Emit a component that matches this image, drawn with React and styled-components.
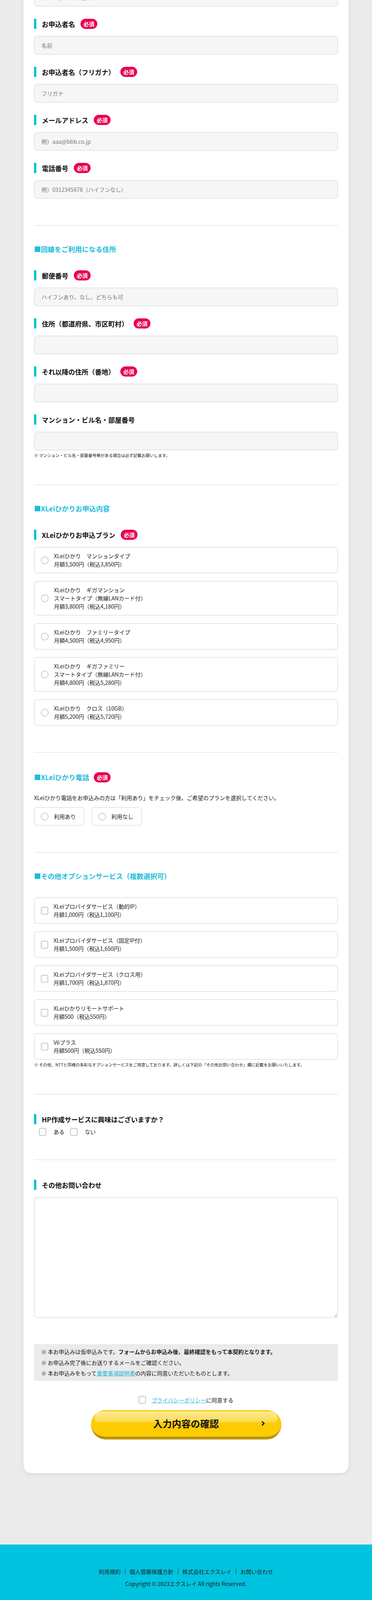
import React from "react";
import styled, { createGlobalStyle } from "styled-components";

const CYAN = "#00c1de";

const GlobalStyle = createGlobalStyle`
  html, body {
    margin: 0;
    padding: 0;
  }
  body {
    background: #ebebeb;
    font-family: "Noto Sans CJK JP", "Noto Sans", sans-serif;
    color: #222;
  }
  * {
    box-sizing: border-box;
  }
`;

const plans = [
  ["XLeiひかり　マンションタイプ", "月額3,500円（税込3,850円）"],
  ["XLeiひかり　ギガマンション", "スマートタイプ（無線LANカード付）", "月額3,800円（税込4,180円）"],
  ["XLeiひかり　ファミリータイプ", "月額4,500円（税込4,950円）"],
  ["XLeiひかり　ギガファミリー", "スマートタイプ（無線LANカード付）", "月額4,800円（税込5,280円）"],
  ["XLeiひかり　クロス（10GB）", "月額5,200円（税込5,720円）"],
];

const options = [
  ["XLeiプロバイダサービス（動的IP）", "月額1,000円（税込1,100円）"],
  ["XLeiプロバイダサービス（固定IP付）", "月額1,500円（税込1,650円）"],
  ["XLeiプロバイダサービス（クロス用）", "月額1,700円（税込1,870円）"],
  ["XLeiひかりリモートサポート", "月額500（税込550円）"],
  ["V6プラス", "月額500円（税込550円）"],
];

const contactFields = [
  { label: "会社名・屋号", placeholder: "法人の方のみご記入ください" },
  { label: "お申込者名", placeholder: "名前", required: true },
  { label: "お申込者名（フリガナ）", placeholder: "フリガナ", required: true },
  { label: "メールアドレス", placeholder: "例）aaa@bbb.co.jp", required: true },
  { label: "電話番号", placeholder: "例）0312345678（ハイフンなし）", required: true },
];

const addressFields = [
  { label: "郵便番号", placeholder: "ハイフンあり、なし、どちらも可", required: true },
  { label: "住所（都道府県、市区町村）", required: true },
  { label: "それ以降の住所（番地）", required: true },
  { label: "マンション・ビル名・部屋番号" },
];

function Field({ label, placeholder, required }) {
  return (
    <FieldBox>
      <Label>
        {label}
        {required && <Badge>必須</Badge>}
      </Label>
      <TextInput type="text" placeholder={placeholder} />
    </FieldBox>
  );
}

function ChoiceCard({ type, name, lines }) {
  return (
    <Choice>
      {type === "radio" ? <Radio name={name} /> : <Check />}
      <span>
        {lines.map((l) => (
          <ChoiceLine key={l}>{l}</ChoiceLine>
        ))}
      </span>
    </Choice>
  );
}

function Arrow() {
  return (
    <ArrowIcon viewBox="0 0 10 14" aria-hidden="true">
      <polyline points="2.5,2 7.5,7 2.5,12" fill="none" stroke="#111" strokeWidth="3" />
    </ArrowIcon>
  );
}

export default function App() {
  return (
    <>
      <GlobalStyle />
      <Card>
        <Section>
          <FieldList>
            {contactFields.map((f) => (
              <Field key={f.label} {...f} />
            ))}
          </FieldList>
        </Section>

        <Section>
          <Heading>■回線をご利用になる住所</Heading>
          <FieldList>
            {addressFields.map((f) => (
              <Field key={f.label} {...f} />
            ))}
          </FieldList>
          <Note>※ マンション・ビル名・部屋番号等がある場合は必ず記載お願いします。</Note>
        </Section>

        <Section>
          <Heading>■XLeiひかりお申込内容</Heading>
          <FieldBox>
            <Label>
              XLeiひかりお申込プラン<Badge>必須</Badge>
            </Label>
            <ChoiceList>
              {plans.map((p) => (
                <ChoiceCard key={p.join()} type="radio" name="plan" lines={p} />
              ))}
            </ChoiceList>
          </FieldBox>
        </Section>

        <Section>
          <Heading $mb={29}>
            ■XLeiひかり電話<Badge>必須</Badge>
          </Heading>
          <Description>
            XLeiひかり電話をお申込みの方は「利用あり」をチェック後、ご希望のプランを選択してください。
          </Description>
          <ChoiceRow>
            <SmallChoice>
              <Radio name="tel" />
              利用あり
            </SmallChoice>
            <SmallChoice>
              <Radio name="tel" />
              利用なし
            </SmallChoice>
          </ChoiceRow>
        </Section>

        <Section>
          <Heading>■その他オプションサービス（複数選択可）</Heading>
          <ChoiceList>
            {options.map((o) => (
              <ChoiceCard key={o.join()} type="check" lines={o} />
            ))}
          </ChoiceList>
          <Note>
            ※ その他、NTTと同様の多彩なオプションサービスをご用意しております。詳しくは下記の「その他お問い合わせ」欄に記載をお願いいたします。
          </Note>
        </Section>

        <Section $pb={61}>
          <Label>HP作成サービスに興味はございますか？</Label>
          <InlineChecks>
            <InlineCheck>
              <Check />
              ある
            </InlineCheck>
            <InlineCheck>
              <Check />
              ない
            </InlineCheck>
          </InlineChecks>
        </Section>

        <Section $last>
          <FieldBox>
            <Label>その他お問い合わせ</Label>
            <TextArea />
          </FieldBox>
        </Section>

        <Notice>
          <p>
            ※ 本お申込みは仮申込みです。<strong>フォームからお申込み後、最終確認をもって本契約となります。</strong>
          </p>
          <p>※ お申込み完了後にお送りするメールをご確認ください。</p>
          <p>
            ※ 本お申込みをもって<TextLink href="#">重要事項説明書</TextLink>の内容に同意いただいたものとします。
          </p>
        </Notice>

        <AgreeRow>
          <Check />
          <span>
            <TextLink href="#">プライバシーポリシー</TextLink>に同意する
          </span>
        </AgreeRow>

        <SubmitButton type="button">
          <span>入力内容の確認</span>
          <Arrow />
        </SubmitButton>
      </Card>

      <Footer>
        <FooterNav>
          <FooterLink href="#">利用規約</FooterLink>
          <Separator />
          <FooterLink href="#">個人情報保護方針</FooterLink>
          <Separator />
          <FooterLink href="#">株式会社エクスレイ</FooterLink>
          <Separator />
          <FooterLink href="#">お問い合わせ</FooterLink>
        </FooterNav>
        <Copyright>Copyright © 2023エクスレイ All rights Reserved.</Copyright>
      </Footer>
    </>
  );
}

const Card = styled.main`
  width: 832px;
  margin: -125px auto 183px;
  padding: 0 27px 86px;
  background: #fff;
  border-radius: 0 0 20px 20px;
  box-shadow: 0 2px 12px rgba(0, 0, 0, 0.09);
`;

const Section = styled.section`
  padding: 50px 0 ${(p) => p.$pb ?? 67}px;
  border-bottom: ${(p) => (p.$last ? "none" : "2px solid #ebebeb")};
`;

const Heading = styled.h2`
  display: flex;
  align-items: center;
  gap: 12px;
  margin: 0 0 ${(p) => p.$mb ?? 44}px;
  font-size: 17.5px;
  line-height: 20px;
  font-weight: 700;
  color: #1dbcd9;
`;

const FieldList = styled.div`
  display: flex;
  flex-direction: column;
  gap: 31px;
`;

const FieldBox = styled.div`
  display: flex;
  flex-direction: column;
  gap: 18px;
`;

const Label = styled.label`
  display: flex;
  align-items: center;
  gap: 14px;
  height: 26px;
  padding-left: 14px;
  border-left: 6px solid ${CYAN};
  font-size: 17px;
  font-weight: 700;
  color: #111;
`;

const Badge = styled.span`
  display: inline-flex;
  align-items: center;
  justify-content: center;
  height: 26px;
  padding: 0 7.5px;
  border-radius: 13px;
  background: #e8004f;
  color: #fff;
  font-size: 14px;
  font-weight: 700;
`;

const TextInput = styled.input`
  display: block;
  width: 100%;
  height: 48px;
  padding: 0 17px;
  border: 2px solid #e5e5e5;
  border-radius: 8px;
  background: #f6f6f6;
  font-family: inherit;
  font-size: 14px;
  color: #222;

  &::placeholder {
    color: #777;
  }
`;

const Note = styled.p`
  margin: 6px 0 0;
  font-size: 10.5px;
  line-height: 14px;
  color: #222;
`;

const ChoiceList = styled.div`
  display: flex;
  flex-direction: column;
  gap: 19px;
`;

const Choice = styled.label`
  display: flex;
  align-items: center;
  gap: 14px;
  padding: 11px 16px;
  border: 2px solid #e6e6e6;
  border-radius: 8px;
  font-size: 14px;
  line-height: 21px;
  color: #222;
`;

const ChoiceLine = styled.span`
  display: block;
`;

const Radio = styled.input.attrs({ type: "radio" })`
  appearance: none;
  flex-shrink: 0;
  width: 19px;
  height: 19px;
  margin: 0;
  border: 1.5px solid #9a9a9a;
  border-radius: 50%;
  background: #fff;
`;

const Check = styled.input.attrs({ type: "checkbox" })`
  appearance: none;
  flex-shrink: 0;
  width: 18px;
  height: 19px;
  margin: 0;
  border: 1.5px solid #929292;
  border-radius: 3px;
  background: #fff;
`;

const Description = styled.p`
  margin: 0 0 14px;
  font-size: 14px;
  line-height: 20px;
  color: #222;
`;

const ChoiceRow = styled.div`
  display: flex;
  gap: 18px;
`;

const SmallChoice = styled.label`
  display: flex;
  align-items: center;
  gap: 14px;
  width: 129px;
  height: 48px;
  padding: 0 16px;
  border: 2px solid #e6e6e6;
  border-radius: 8px;
  font-size: 14px;
  color: #222;
`;

const InlineChecks = styled.div`
  display: flex;
  align-items: center;
  height: 20px;
  margin-top: 9px;
  padding-left: 13px;
`;

const InlineCheck = styled.label`
  display: flex;
  align-items: center;
  gap: 19px;
  margin-right: 15px;
  font-size: 14px;
  color: #222;
`;

const TextArea = styled.textarea`
  display: block;
  width: 100%;
  height: 310px;
  padding: 12px 17px;
  border: 2px solid #e6e6e6;
  border-radius: 8px;
  background: #fff;
  font-family: inherit;
  font-size: 14px;
  resize: vertical;
`;

const Notice = styled.div`
  padding: 6px 18px 5px;
  background: #ebebeb;
  font-size: 14px;
  line-height: 27.5px;
  color: #222;

  p {
    margin: 0;
  }
`;

const TextLink = styled.a`
  color: #1fb6d6;
  text-decoration: underline;
`;

const AgreeRow = styled.label`
  display: flex;
  justify-content: center;
  align-items: center;
  gap: 15px;
  height: 22px;
  margin-top: 38px;
  font-size: 14px;
  color: #222;
`;

const SubmitButton = styled.button`
  position: relative;
  display: flex;
  align-items: center;
  justify-content: center;
  width: 487px;
  height: 75px;
  margin: 15px auto 0;
  padding: 0;
  border: none;
  border-bottom: 7px solid #b8920c;
  border-radius: 38px;
  background: #fccc00;
  box-shadow: inset 0 0 0 1px #f2c200;
  font-family: inherit;
  font-size: 24px;
  font-weight: 700;
  color: #111;
  cursor: pointer;

  &::before {
    content: "";
    position: absolute;
    top: 3px;
    left: 9px;
    right: 9px;
    height: 28px;
    border-radius: 28px 28px 14px 14px;
    background: linear-gradient(#fdea94, #fdd94e);
  }

  span {
    position: relative;
  }
`;

const ArrowIcon = styled.svg`
  position: absolute;
  right: 42px;
  top: 50%;
  width: 10px;
  height: 14px;
  transform: translateY(-50%);
`;

const Footer = styled.footer`
  padding: 59px 0 57px;
  background: #00c3df;
  text-align: center;
  font-size: 14px;
  line-height: 20px;
  color: #222;
`;

const FooterNav = styled.nav`
  display: flex;
  justify-content: center;
  align-items: center;
`;

const FooterLink = styled.a`
  color: inherit;
  text-decoration: none;
`;

const Separator = styled.span`
  width: 1px;
  height: 15px;
  margin: 0 11px;
  background: #333;
`;

const Copyright = styled.p`
  margin: 11px 0 0;
`;
